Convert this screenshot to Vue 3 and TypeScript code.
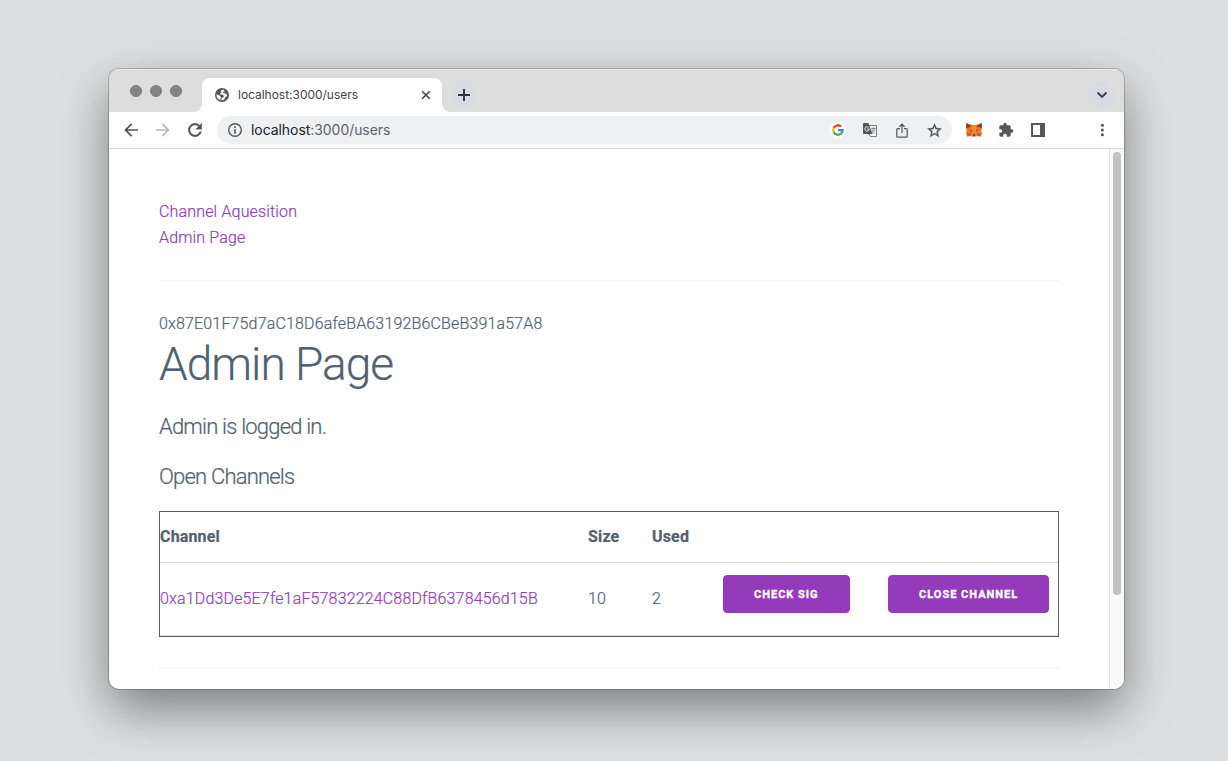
<script setup lang="ts">
interface ChannelRow {
  address: string
  size: number
  used: number
}

const host = 'localhost'
const path = ':3000/users'
const account = '0x87E01F75d7aC18D6afeBA63192B6CBeB391a57A8'
const navigation: string[] = ['Channel Aquesition', 'Admin Page']
const channels: ChannelRow[] = [
  { address: '0xa1Dd3De5E7fe1aF57832224C88DfB6378456d15B', size: 10, used: 2 },
]
</script>

<template>
  <div class="desktop">
    <div class="window">
      <header class="tabstrip">
        <div class="lights"><i></i><i></i><i></i></div>
        <div class="tab">
          <svg class="globe" width="14" height="14" viewBox="0 0 14 14">
            <circle cx="7" cy="7" r="7" fill="#54585d" />
            <path d="M8.2 1.6 6.3 2.2 5.6 3.6 6.8 4.4 5.2 5.2 5.4 6.6 8 6.8 9 8.2 8.200 9.400 6.600 10 6.300 12.200 8 12.300 9.500 11 10.300 9.200 11.900 8.300 12.300 6.500 10.800 6.200 10 5 7.800 5.200 8 4 9.800 3.600z" fill="#fff" />
            <path d="M1.500 6.200 4.700 7.600 6 9.200 5.300 12.100A5.600 5.600 0 0 1 1.500 6.200z" fill="#fff" />
          </svg>
          <span class="tab-title">{{ host }}{{ path }}</span>
          <svg class="close" width="10" height="10" viewBox="0 0 10 10"><path d="M1.2 1.2l7.6 7.6M8.8 1.2 1.2 8.8" stroke="#3c4043" stroke-width="1.5" fill="none" /></svg>
        </div>
        <div class="round plus">
          <svg width="14" height="14" viewBox="0 0 14 14"><path d="M7 1v12M1 7h12" stroke="#303236" stroke-width="1.9" fill="none" /></svg>
        </div>
        <div class="round search">
          <svg width="12" height="8" viewBox="0 0 12 8"><path d="M1.5 1.5 6 6l4.5-4.5" stroke="#3c4043" stroke-width="1.9" fill="none" /></svg>
        </div>
      </header>

      <div class="toolbar">
        <span class="ico"><svg width="20" height="20" viewBox="0 0 24 24"><path fill="#4f5357" d="M20.500 11H7.83l5.59-5.59L12 4l-8 8 8 8 1.41-1.41L7.83 13H20.500z" /></svg></span>
        <span class="ico"><svg width="20" height="20" viewBox="0 0 24 24"><path fill="#b5b7b9" d="M3.500 11h12.670l-5.59-5.59L12 4l8 8-8 8-1.41-1.41L16.17 13H3.500z" /></svg></span>
        <span class="ico"><svg width="20" height="20" viewBox="0 0 24 24"><path fill="#4f5357" stroke="#4f5357" stroke-width=".5" d="M17.65 6.35C16.2 4.9 14.21 4 12 4c-4.42 0-7.99 3.58-7.99 8s3.57 8 7.99 8c3.73 0 6.84-2.55 7.73-6h-2.08c-.82 2.33-3.04 4-5.65 4-3.31 0-6-2.69-6-6s2.69-6 6-6c1.66 0 3.14.69 4.22 1.78L13 11h7V4z" /></svg></span>
        <div class="omnibox">
          <span class="ico">
            <svg width="14" height="14" viewBox="0 0 14 14"><circle cx="7" cy="7" r="6.3" fill="none" stroke="#54585d" stroke-width="1.4" /><path d="M7 3.3v1.6M7 6v4.7" stroke="#54585d" stroke-width="1.6" /></svg>
          </span>
          <span class="url"><b>{{ host }}</b>{{ path }}</span>
          <span class="ico google">
            <svg width="12" height="12" viewBox="0 0 48 48">
              <path fill="#EA4335" d="M24 9.5c3.54 0 6.71 1.22 9.21 3.6l6.85-6.85C35.9 2.38 30.47 0 24 0 14.62 0 6.51 5.38 2.56 13.22l7.98 6.19C12.43 13.72 17.74 9.5 24 9.5z" />
              <path fill="#4285F4" d="M46.98 24.55c0-1.57-.15-3.09-.38-4.55H24v9.02h12.94c-.58 2.96-2.26 5.48-4.78 7.18l7.73 6c4.51-4.18 7.09-10.36 7.09-17.65z" />
              <path fill="#FBBC05" d="M10.53 28.59A14.5 14.5 0 0 1 9.77 24c0-1.6.27-3.14.76-4.59l-7.98-6.19A24 24 0 0 0 0 24c0 3.88.92 7.54 2.56 10.78z" />
              <path fill="#34A853" d="M24 48c6.48 0 11.93-2.13 15.89-5.81l-7.73-6c-2.15 1.45-4.92 2.3-8.16 2.3-6.26 0-11.57-4.22-13.47-9.91l-7.98 6.19C6.51 42.62 14.62 48 24 48z" />
            </svg>
          </span>
          <span class="ico">
            <svg width="14" height="14" viewBox="0 0 14 14">
              <path d="M5.5 2.5h8v11H7.2" fill="#f6f7f8" stroke="#7b7f83" stroke-width="1" />
              <path d="M1 0h4.3l1 2.3L9.6 11H6.8l1 3-2.6-3H1a1 1 0 0 1-1-1V1a1 1 0 0 1 1-1z" fill="#54585d" />
              <path d="M5.6 4.3A2.2 2.2 0 1 0 6.3 6H4.3" fill="none" stroke="#eff1f3" stroke-width="1" />
              <path d="M8.4 5.5h4.2M10.4 4.3v1.2M12 5.6c-.4 2-1.6 3.5-2.8 4.3M9 6.4c.6 1.6 1.8 3 3 4" fill="none" stroke="#7b7f83" stroke-width=".9" />
            </svg>
          </span>
          <span class="ico">
            <svg width="12" height="15" viewBox="0 0 12 15"><path d="M4 5.7H1.7a.9.9 0 0 0-.9.9v6.600c0 .5.4.9.9.9h8.600c.5 0 .9-.4.9-.9V6.600a.9.9 0 0 0-.9-.9H8M6 10V1.200M3.400 3.800 6 1.200l2.600 2.600" fill="none" stroke="#54585d" stroke-width="1.25" /></svg>
          </span>
          <span class="ico">
            <svg width="17" height="17" viewBox="0 0 24 24"><path fill="#4f5357" stroke="#4f5357" stroke-width=".4" d="M22 9.24l-7.19-.62L12 2 9.19 8.63 2 9.24l5.46 4.73L5.82 21 12 17.27 18.18 21l-1.63-7.03zM12 15.4l-3.76 2.27 1-4.28-3.32-2.88 4.38-.38L12 6.1l1.71 4.04 4.38.38-3.32 2.88 1 4.28z" /></svg>
          </span>
        </div>
        <span class="ico fox">
          <svg width="16" height="16" viewBox="0 0 16 16">
            <path d="M.3 1 6 3h4l5.700-2 .3 3.500-.6 4.500.4 2.500-1.200 3-3.600-.4L9.500 15h-3L5 14.100l-3.600.4-1.200-3L.6 9 0 4.500z" fill="#ec7628" />
            <path d="M.3 1 5.600 4 3.400 5.200.6 6.500 0 4.300zM15.700 1l-5.300 3 2.200 1.200 2.800 1.300.6-2.200z" fill="#884526" />
            <path d="M6 3h4l.6 4.500L9.300 12H6.700L5.400 7.500z" fill="#f58237" />
            <path d="M3.300 7.800 6 8.500l-.4 1zM12.700 7.800 10 8.500l.4 1z" fill="#5c3a2c" />
            <path d="M.2 11.500 4.800 11l.9 2.600-4.300.9zM15.800 11.500l-4.600-.5-.9 2.600 4.300.9z" fill="#d9602a" />
            <path d="M5.300 12.600 6.700 12h2.600l1.400.6-.8 2.200H6.100z" fill="#cdb8aa" />
            <path d="M6.900 12.300h2.200l.4 1.500h-3z" fill="#262a33" />
          </svg>
        </span>
        <span class="ico">
          <svg width="16" height="16" viewBox="0 0 24 24"><path fill="#54585d" d="M20.500 11H19V7c0-1.100-.9-2-2-2h-4V3.500a2.500 2.500 0 0 0-5 0V5H4c-1.100 0-1.990.9-1.990 2v3.800H3.500c1.490 0 2.700 1.210 2.700 2.700s-1.210 2.700-2.700 2.700H2V20c0 1.100.9 2 2 2h3.800v-1.500c0-1.490 1.210-2.700 2.700-2.700s2.700 1.210 2.700 2.700V22H17c1.100 0 2-.9 2-2v-4h1.500a2.500 2.500 0 0 0 0-5z" /></svg>
        </span>
        <span class="ico">
          <svg width="14" height="14" viewBox="0 0 14 14"><path fill="#54585d" fill-rule="evenodd" d="M0 0h14v14H0zM2 2v10h7V2z" /></svg>
        </span>
        <span class="ico menu">
          <svg width="4" height="14" viewBox="0 0 4 14"><g fill="#4f5357"><circle cx="2.400" cy="2.300" r="1.500" /><circle cx="2.400" cy="7" r="1.500" /><circle cx="2.400" cy="11.700" r="1.500" /></g></svg>
        </span>
      </div>

      <div class="viewport">
        <main class="page">
          <nav>
            <div v-for="item in navigation" :key="item"><a>{{ item }}</a></div>
          </nav>
          <hr />
          <div>{{ account }}</div>
          <h1>Admin Page</h1>
          <h4>Admin is logged in.</h4>
          <h4>Open Channels</h4>
          <table>
            <colgroup>
              <col class="c-channel" /><col class="c-size" /><col class="c-used" /><col class="c-check" /><col />
            </colgroup>
            <thead>
              <tr><th>Channel</th><th>Size</th><th>Used</th><th></th><th></th></tr>
            </thead>
            <tbody>
              <tr v-for="row in channels" :key="row.address">
                <td><a>{{ row.address }}</a></td>
                <td>{{ row.size }}</td>
                <td>{{ row.used }}</td>
                <td><button>Check Sig</button></td>
                <td><button>Close Channel</button></td>
              </tr>
            </tbody>
          </table>
          <hr />
        </main>
        <div class="scrollbar"><div class="thumb"></div></div>
      </div>
    </div>
  </div>
</template>

<style>
body {
  background: #dedfe1;
}
</style>

<style scoped>
* {
  box-sizing: border-box;
}
.desktop {
  height: 761px;
  padding: 69px 0 0 109px;
  overflow: hidden;
  background: #dedfe1;
}
.window {
  display: flex;
  flex-direction: column;
  width: 1015px;
  height: 620px;
  border-radius: 10px;
  overflow: hidden;
  background: #fff;
  box-shadow: 0 0 0 1px rgba(0, 0, 0, 0.2), 0 20px 50px rgba(0, 0, 0, 0.44);
}
.tabstrip {
  display: flex;
  height: 43px;
  padding: 9px 10px 0 21px;
  background: #ddd;
  box-shadow: inset 0 1px #e9e9e9;
  flex: none;
}
.lights {
  display: flex;
  gap: 8px;
  padding-top: 7px;
  width: 72px;
}
.lights i {
  width: 12px;
  height: 12px;
  border-radius: 50%;
  background: #848484;
  border: 1px solid #7b7b7b;
}
.tab {
  position: relative;
  display: flex;
  align-items: center;
  width: 240px;
  height: 34px;
  padding: 0 11px 0 13px;
  border-radius: 8px 8px 0 0;
  background: #fff;
}
.tab::before,
.tab::after {
  content: '';
  position: absolute;
  bottom: 0;
  width: 8px;
  height: 8px;
}
.tab::before {
  left: -8px;
  background: radial-gradient(circle at 0 0, transparent 7.5px, #fff 8px);
}
.tab::after {
  right: -8px;
  background: radial-gradient(circle at 100% 0, transparent 7.5px, #fff 8px);
}
.tab-title {
  margin-left: 9px;
  padding-bottom: 2px;
  font: 12px Inter, sans-serif;
  letter-spacing: -0.02px;
  color: #3f4246;
}
.close {
  margin-left: auto;
}
.round {
  display: flex;
  align-items: center;
  justify-content: center;
  width: 28px;
  height: 28px;
  margin-top: 3px;
  border-radius: 50%;
  background: #d8dbe2;
}
.plus {
  margin-left: 8px;
}
.search {
  margin-left: auto;
  margin-right: -2px;
}
.toolbar {
  display: flex;
  align-items: center;
  gap: 8px;
  height: 37px;
  padding: 0 10px;
  border-bottom: 1px solid #d5d6d8;
  flex: none;
}
.ico {
  display: flex;
  align-items: center;
  justify-content: center;
  width: 24px;
  height: 24px;
  flex: none;
}
.omnibox {
  display: flex;
  align-items: center;
  gap: 8px;
  width: 735px;
  height: 28px;
  margin: 0 2px;
  padding: 0 6px;
  border-radius: 14px;
  background: #eff0f2;
}
.url {
  margin-left: -4px;
  margin-right: auto;
  padding-bottom: 2px;
  font: 14px Inter, sans-serif;
  letter-spacing: -0.06px;
  color: #5f6368;
}
.url b {
  font-weight: 400;
  color: #202124;
}
.google svg {
  box-sizing: content-box;
  padding: 2px;
  border-radius: 50%;
  background: #fff;
}
.menu {
  margin-left: auto;
}
.viewport {
  display: flex;
  flex: 1;
  min-height: 0;
}
.page {
  width: 1000px;
  padding: 50px 50px 0;
  overflow: hidden;
  font-family: Roboto, sans-serif;
  font-size: 16px;
  font-weight: 300;
  line-height: 1.6;
  letter-spacing: 0.01em;
  color: #53616c;
  -webkit-text-stroke: 0.2px;
}
a {
  color: #933bbb;
}
hr {
  margin: 30px 0;
  border: 0;
  border-top: 1px solid #f2f3f4;
}
h1 {
  margin: 0 0 20px;
  font-size: 46px;
  font-weight: 300;
  line-height: 1.2;
  letter-spacing: -1px;
}
h4 {
  margin: 0 0 20px;
  font-size: 22px;
  font-weight: 300;
  line-height: 1.35;
  letter-spacing: -0.8px;
}
table {
  width: 900px;
  table-layout: fixed;
  border-spacing: 0;
  border: 1px solid #53616c;
}
.c-channel {
  width: 428px;
}
.c-size {
  width: 64px;
}
.c-used {
  width: 71px;
}
.c-check {
  width: 165px;
}
th,
td {
  padding: 12px 0;
  text-align: left;
  border-bottom: 1px solid #dcdcdc;
}
th {
  font-weight: 700;
}
button {
  display: block;
  height: 38px;
  margin: 0 0 10px;
  padding: 1px 30px 0;
  border: 1px solid #933bbb;
  border-radius: 4px;
  background: #933bbb;
  color: #fff;
  font: 700 11px/36px Roboto, sans-serif;
  letter-spacing: 1px;
  text-transform: uppercase;
  white-space: nowrap;
  -webkit-text-stroke: 0.35px;
}
.scrollbar {
  width: 15px;
  padding: 3px 3px 0 3px;
  border-left: 1px solid #e2e2e2;
  background: #fafafa;
}
.thumb {
  width: 8px;
  height: 443px;
  border-radius: 4px;
  background: #c1c1c1;
}
</style>
